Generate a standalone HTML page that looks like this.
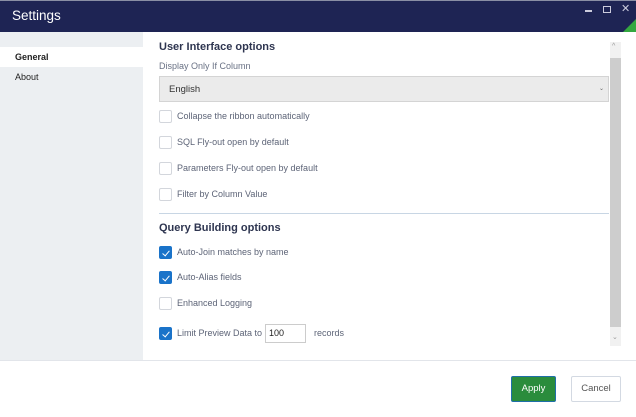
<!DOCTYPE html>
<html><head><style>
*{box-sizing:border-box;margin:0;padding:0}
body{width:636px;height:417px;background:#fff;font-family:"Liberation Sans",sans-serif;position:relative;overflow:hidden}
.a{position:absolute}
.title{left:0;top:0;width:636px;height:32px;background:#1e2454;border-top:1px solid #8a8fa5}
.side{left:0;top:32px;width:143px;height:328px;background:#eceff2}
.h{font-size:11px;font-weight:bold;color:#2e3550;left:159px}
.t{font-size:9px;color:#5d6477;left:177px}
.cb{left:159px;width:13px;height:13px;border:1px solid #d3d6dc;border-radius:2px;background:#fff}
.cb.on{background:#1a73c9;border-color:#1a73c9}
.cb.on::after{content:"";position:absolute;left:4px;top:1.5px;width:3px;height:6px;border:solid #fff;border-width:0 1.5px 1.5px 0;transform:rotate(40deg)}
</style></head><body>
<div class="a title"></div>
<div class="a" style="left:12px;top:8px;font-size:13.5px;color:#fff">Settings</div>
<div class="a" style="left:585px;top:10px;width:7px;height:1.5px;background:#ccd"></div>
<div class="a" style="left:603px;top:6px;width:8px;height:7px;border:1.2px solid #ccd"></div>
<div class="a" style="left:621px;top:2px;font-size:11px;color:#ccd">✕</div>
<div class="a" style="left:623px;top:19px;width:0;height:0;border-left:13px solid transparent;border-bottom:13px solid #34a840"></div>
<div class="a side"></div>
<div class="a" style="left:0;top:47px;width:143px;height:20px;background:#fff"></div>
<div class="a" style="left:15px;top:52px;font-size:9px;font-weight:bold;color:#222">General</div>
<div class="a" style="left:15px;top:72px;font-size:9px;color:#222">About</div>
<div class="a h" style="top:41px">User Interface options</div>
<div class="a" style="left:159px;top:61px;font-size:9px;color:#6a7285">Display Only If Column</div>
<div class="a" style="left:159px;top:76px;width:450px;height:26px;background:#ebebeb;border:1px solid #d4d4d4"></div>
<div class="a" style="left:169px;top:84px;font-size:9.5px;color:#333">English</div>
<div class="a" style="left:599px;top:85px;font-size:6px;color:#666">⌄</div>
<div class="a cb" style="top:110px"></div><div class="a t" style="top:111px">Collapse the ribbon automatically</div>
<div class="a cb" style="top:136px"></div><div class="a t" style="top:137px">SQL Fly-out open by default</div>
<div class="a cb" style="top:162px"></div><div class="a t" style="top:163px">Parameters Fly-out open by default</div>
<div class="a cb" style="top:188px"></div><div class="a t" style="top:189px">Filter by Column Value</div>
<div class="a" style="left:159px;top:213px;width:450px;height:1px;background:#c8d6e4"></div>
<div class="a h" style="top:222px">Query Building options</div>
<div class="a cb on" style="top:246px"></div><div class="a t" style="top:247px">Auto-Join matches by name</div>
<div class="a cb on" style="top:271px"></div><div class="a t" style="top:272px">Auto-Alias fields</div>
<div class="a cb" style="top:297px"></div><div class="a t" style="top:298px">Enhanced Logging</div>
<div class="a cb on" style="top:327px"></div><div class="a t" style="top:328px">Limit Preview Data to</div>
<div class="a" style="left:265px;top:324px;width:41px;height:19px;border:1px solid #ccc;font-size:9px;color:#222;padding:3px 0 0 3px">100</div>
<div class="a t" style="left:314px;top:328px">records</div>
<div class="a" style="left:610px;top:42px;width:11px;height:304px;background:#f1f1f1"></div>
<div class="a" style="left:610px;top:58px;width:11px;height:269px;background:#cdcdcd"></div>
<div class="a" style="left:612px;top:43px;font-size:7px;color:#999">^</div>
<div class="a" style="left:612px;top:333px;font-size:7px;color:#999">⌄</div>
<div class="a" style="left:0;top:360px;width:636px;height:1px;background:#e2e5ea"></div>
<div class="a" style="left:511px;top:376px;width:45px;height:26px;background:#2a8c3c;border:1px solid #1f6fa8;border-radius:2px;color:#fff;font-size:9.5px;text-align:center;line-height:24px">Apply</div>
<div class="a" style="left:571px;top:376px;width:50px;height:26px;background:#fff;border:1px solid #d3d9e2;border-radius:2px;color:#555;font-size:9.5px;text-align:center;line-height:24px">Cancel</div>
</body></html>
